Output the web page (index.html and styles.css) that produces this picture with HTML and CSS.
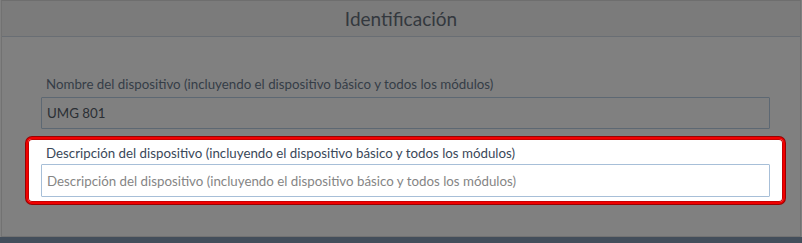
FILE: index.html
```html
<!DOCTYPE html>
<html lang="es">
<head>
<meta charset="utf-8">
<title>Identificación</title>
<link rel="stylesheet" href="styles.css">
</head>
<body>
<div class="page">
  <section class="panel">
    <header class="panel-head">
      <h2 class="panel-title">Identificación</h2>
    </header>
    <div class="panel-body">
      <div class="group">
        <label class="label" for="name">Nombre del dispositivo (incluyendo el dispositivo básico y todos los módulos)</label>
        <input class="input input-dim" id="name" type="text" value="UMG 801">
      </div>
      <div class="group group-highlight">
        <label class="label label-hl" for="desc">Descripción del dispositivo (incluyendo el dispositivo básico y todos los módulos)</label>
        <input class="input input-hl" id="desc" type="text" placeholder="Descripción del dispositivo (incluyendo el dispositivo básico y todos los módulos)">
      </div>
    </div>
  </section>
  <div class="bottom-bar"></div>
</div>
</body>
</html>
```
FILE: styles.css
```css
html, body {
  margin: 0;
  padding: 0;
  background: #808080;
  height: 243px;
  overflow: hidden;
}
body {
  font-family: "Lato", "Noto Sans", sans-serif;
  font-size: 13.3px;
  color: #3c4550;
}
.page {
  display: flex;
  flex-direction: column;
  height: 243px;
}
.panel {
  margin-left: 1px;
  width: 798px;
  height: 235px;
  border: 1px solid #727272;
  border-top-color: #6e6e6e;
  background: #808080;
  display: flex;
  flex-direction: column;
}
.panel-head {
  height: 35px;
  background: #7b7b7b;
  border-bottom: 1px solid #696e74;
  display: flex;
  align-items: center;
  justify-content: center;
}
.panel-title {
  margin: 0;
  font-weight: 400;
  font-size: 19px;
  color: #33383e;
}
.panel-body {
  padding: 38px 30px 0 39px;
  display: flex;
  flex-direction: column;
}
.group {
  display: flex;
  flex-direction: column;
}
.label {
  line-height: 18px;
  padding-left: 5px;
  margin-bottom: 4px;
  color: #353d47;
}
.input {
  box-sizing: border-box;
  width: 100%;
  height: 32px;
  margin: 0;
  padding: 0 5px;
  font-family: inherit;
  font-size: 13.3px;
  border: 1px solid #5d6873;
  border-radius: 1px;
  outline: none;
}
.input-dim {
  background: #808080;
  color: #2a2f34;
}
.group-highlight {
  margin: 8px -15px 0;
  padding: 5px 13px 5px;
  background: #ffffff;
  border: 2px solid #f00000;
  border-radius: 6px;
  box-shadow: 0 0 0 1px #9a0000, inset 0 0 0 1px #c80000;
}
.label-hl {
  color: #3a4859;
  margin-bottom: 2px;
}
.input-hl {
  height: 33px;
  background: #ffffff;
  border: 1px solid #a7bfd8;
  color: #333;
}
.input-hl::placeholder {
  color: #858585;
  opacity: 1;
}
.bottom-bar {
  flex: 1;
  background: #434e5b;
}
```
